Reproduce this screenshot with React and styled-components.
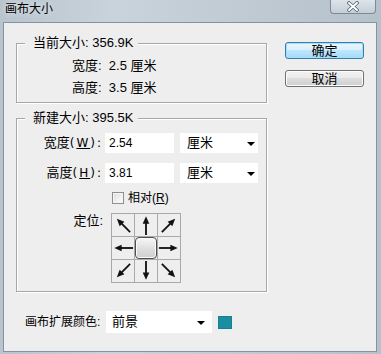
import React from 'react';
import styled, { createGlobalStyle } from 'styled-components';

const Global = createGlobalStyle`
  html, body { margin: 0; padding: 0; overflow: hidden; background: #bfcad4; }
  body {
    font-family: "Liberation Sans", "Noto Sans CJK SC", sans-serif;
    font-size: 12px;
    color: #000;
  }
`;

const Window = styled.div`
  width: 381px;
  height: 354px;
  display: flex;
  flex-direction: column;
  background: linear-gradient(90deg, #b8c4ce 0%, #c9d3db 30%, #bfcad3 65%, #b5c1cb 100%);
`;

const TitleBar = styled.div`
  height: 22px;
  flex: none;
  display: flex;
  align-items: flex-start;
`;

const Title = styled.div`
  padding: 1px 0 0 5px;
  line-height: 16px;
  font-size: 12px;
  text-shadow: 0 0 6px rgba(255, 255, 255, 0.9);
`;

const CloseButton = styled.div`
  margin-left: auto;
  margin-right: 5px;
  width: 46px;
  height: 14px;
  box-sizing: border-box;
  border: 1px solid #7d8a96;
  border-top: none;
  border-radius: 0 0 4px 4px;
  background: linear-gradient(#dde4ea, #c4ced7);
  display: flex;
  align-items: center;
  justify-content: center;
`;

const Client = styled.div`
  flex: 1;
  margin: 0 4px 2px 3px;
  border: 1px solid #8692a0;
  background: #eeeeee;
  padding: 12px 11px 0 12px;
  display: flex;
  flex-direction: column;
`;

const TopRow = styled.div`
  display: flex;
  gap: 18px;
  align-items: flex-start;
`;

const LeftCol = styled.div`
  width: 251px;
  display: flex;
  flex-direction: column;
  gap: 7px;
`;

const GroupBox = styled.fieldset`
  margin: 0;
  min-width: 0;
  padding: ${p => p.$pt}px 0 ${p => p.$pb}px 0;
  border: 1px solid #a7a7a7;
  box-shadow: 1px 1px 0 #ffffff, inset 1px 1px 0 #ffffff;
`;

const Legend = styled.legend`
  margin-left: 8px;
  padding: 0 5px 0 8px;
  line-height: 16px;
  font-size: 13px;
  background: #eeeeee;
`;

const InfoBlock = styled.div`
  padding-left: 55px;
`;

const InfoRow = styled.div`
  line-height: 22px;
  font-size: 13px;
  white-space: pre;
`;

const FormRow = styled.div`
  display: grid;
  grid-template-columns: 88px 75px 78px;
  align-items: ${p => p.$align || 'center'};
  margin-top: ${p => p.$mt || 0}px;
  height: ${p => p.$h}px;
`;

const Label = styled.div`
  text-align: right;
  padding-right: 2px;
  line-height: 16px;
  font-size: 13px;
  white-space: nowrap;
`;

const Mnemonic = styled.span`
  font-family: "DejaVu Sans", sans-serif;
  font-size: 12px;
  letter-spacing: ${p => p.$ls || 0}px;
`;

const Key = styled.span`
  text-decoration: underline;
  text-underline-offset: 1px;
`;

const TextBox = styled.input`
  box-sizing: border-box;
  width: 69px;
  height: 20px;
  border: none;
  outline: none;
  background: #ffffff;
  padding: 0 0 0 4px;
  font-family: "Liberation Sans", sans-serif;
  font-size: 12px;
  color: #000;
`;

const Select = styled.div`
  box-sizing: border-box;
  width: ${p => p.$w}px;
  height: ${p => p.$h}px;
  background: #ffffff;
  display: flex;
  align-items: center;
  padding: 0 ${p => p.$pr}px 0 ${p => p.$pl}px;
`;

const SelectText = styled.span`
  flex: 1;
  line-height: 16px;
  font-size: ${p => p.$fs || 12}px;
`;

const Caret = styled.span`
  width: 0;
  height: 0;
  border-left: 4px solid transparent;
  border-right: 4px solid transparent;
  border-top: 4px solid #000;
  margin-top: 2px;
`;

const CheckLine = styled.label`
  grid-column: 2 / 4;
  display: flex;
  align-items: center;
  gap: 4px;
  padding-left: 7px;
  line-height: 14px;
`;

const CheckBox = styled.span`
  box-sizing: border-box;
  width: 12px;
  height: 12px;
  border: 1px solid #8e8f8f;
  background: linear-gradient(135deg, #dcdcdc, #ffffff);
  box-shadow: inset 0 0 0 1px #f4f4f4;
`;

const AnchorGrid = styled.div`
  grid-column: 2 / 4;
  margin-left: 6px;
  width: 70px;
  display: grid;
  grid-template-columns: repeat(3, 22px);
  grid-template-rows: repeat(3, 22px);
  gap: 1px;
  padding: 1px;
  box-sizing: border-box;
  background: #a9a9a9;
`;

const Cell = styled.div`
  background: #eeeeee;
  display: flex;
  align-items: center;
  justify-content: center;
`;

const CenterKnob = styled.div`
  width: 22px;
  height: 22px;
  box-sizing: border-box;
  border: 1px solid #4e4e4e;
  border-radius: 4px;
  background: linear-gradient(#f7f7f7, #dcdcdc 60%, #cfcfcf);
  box-shadow: inset 0 0 0 1px #fafafa;
`;

const ButtonCol = styled.div`
  display: flex;
  flex-direction: column;
  gap: 11px;
  margin-top: 7px;
`;

const Button = styled.button`
  width: 79px;
  height: 17px;
  padding: 0;
  border-radius: 3px;
  font-family: "Liberation Sans", "Noto Sans CJK SC", sans-serif;
  font-size: 13px;
  line-height: 14px;
  color: #000;
  border: 1px solid ${p => (p.$primary ? '#3d7bad' : '#707070')};
  background: ${p =>
    p.$primary
      ? 'linear-gradient(#eaf6fd 0%, #d9f0fc 45%, #bee6fd 50%, #a7d9f5 100%)'
      : 'linear-gradient(#f2f2f2 0%, #ebebeb 45%, #dddddd 50%, #cfcfcf 100%)'};
  box-shadow: inset 0 0 0 1px ${p => (p.$primary ? '#9de2fb' : '#fcfcfc')};
`;

const BottomRow = styled.div`
  display: flex;
  align-items: center;
  margin-top: 19px;
  padding-left: 9px;
`;

const BottomLabel = styled.div`
  width: 81px;
  line-height: 16px;
`;

const Swatch = styled.div`
  width: 14px;
  height: 13px;
  margin-left: 6px;
  background: #1b8ea2;
  box-shadow: inset 0 0 0 1px #17808f;
`;

const Arrow = ({ angle }) => (
  <svg width="22" height="22" viewBox="0 0 24 24">
    <g transform={`rotate(${angle} 12 12)`}>
      <line x1="12" y1="23" x2="12" y2="8" stroke="#111" strokeWidth="2" />
      <polygon points="12,2.5 8.4,10.5 15.6,10.5" fill="#111" />
    </g>
  </svg>
);

const CloseGlyph = () => (
  <svg width="14" height="11" viewBox="0 0 14 11">
    <path d="M3 2 L11 9 M11 2 L3 9" stroke="#56616c" strokeWidth="3.6" strokeLinecap="round" />
    <path d="M3 2 L11 9 M11 2 L3 9" stroke="#ffffff" strokeWidth="2" strokeLinecap="round" />
  </svg>
);

const cells = [-45, 0, 45, -90, null, 90, -135, 180, 135];

export default function App() {
  return (
    <>
      <Global />
      <Window>
        <TitleBar>
          <Title>画布大小</Title>
          <CloseButton>
            <CloseGlyph />
          </CloseButton>
        </TitleBar>
        <Client>
          <TopRow>
            <LeftCol>
              <GroupBox $pt={4} $pb={3}>
                <Legend>当前大小: 356.9K</Legend>
                <InfoBlock>
                  <InfoRow>宽度:  2.5 厘米</InfoRow>
                  <InfoRow>高度:  3.5 厘米</InfoRow>
                </InfoBlock>
              </GroupBox>
              <GroupBox $pt={7} $pb={8}>
                <Legend>新建大小: 395.5K</Legend>
                <FormRow $h={20}>
                  <Label>宽度<Mnemonic $ls={2}>(<Key>W</Key>):</Mnemonic></Label>
                  <TextBox readOnly value="2.54" />
                  <Select $w={78} $h={20} $pr={3} $pl={7}>
                    <SelectText $fs={13}>厘米</SelectText>
                    <Caret />
                  </Select>
                </FormRow>
                <FormRow $h={20} $mt={10}>
                  <Label>高度<Mnemonic $ls={2}>(<Key>H</Key>):</Mnemonic></Label>
                  <TextBox readOnly value="3.81" />
                  <Select $w={78} $h={20} $pr={3} $pl={7}>
                    <SelectText $fs={13}>厘米</SelectText>
                    <Caret />
                  </Select>
                </FormRow>
                <FormRow $h={14} $mt={8}>
                  <div />
                  <CheckLine>
                    <CheckBox />
                    <span>相对(<Key>R</Key>)</span>
                  </CheckLine>
                </FormRow>
                <FormRow $h={70} $mt={8} $align="start">
                  <Label>定位:</Label>
                  <AnchorGrid>
                    {cells.map((a, i) => (
                      <Cell key={i}>{a === null ? <CenterKnob /> : <Arrow angle={a} />}</Cell>
                    ))}
                  </AnchorGrid>
                </FormRow>
              </GroupBox>
            </LeftCol>
            <ButtonCol>
              <Button $primary>确定</Button>
              <Button>取消</Button>
            </ButtonCol>
          </TopRow>
          <BottomRow>
            <BottomLabel>画布扩展颜色:</BottomLabel>
            <Select $w={106} $h={22} $pr={7} $pl={6}>
              <SelectText $fs={13}>前景</SelectText>
              <Caret />
            </Select>
            <Swatch />
          </BottomRow>
        </Client>
      </Window>
    </>
  );
}
